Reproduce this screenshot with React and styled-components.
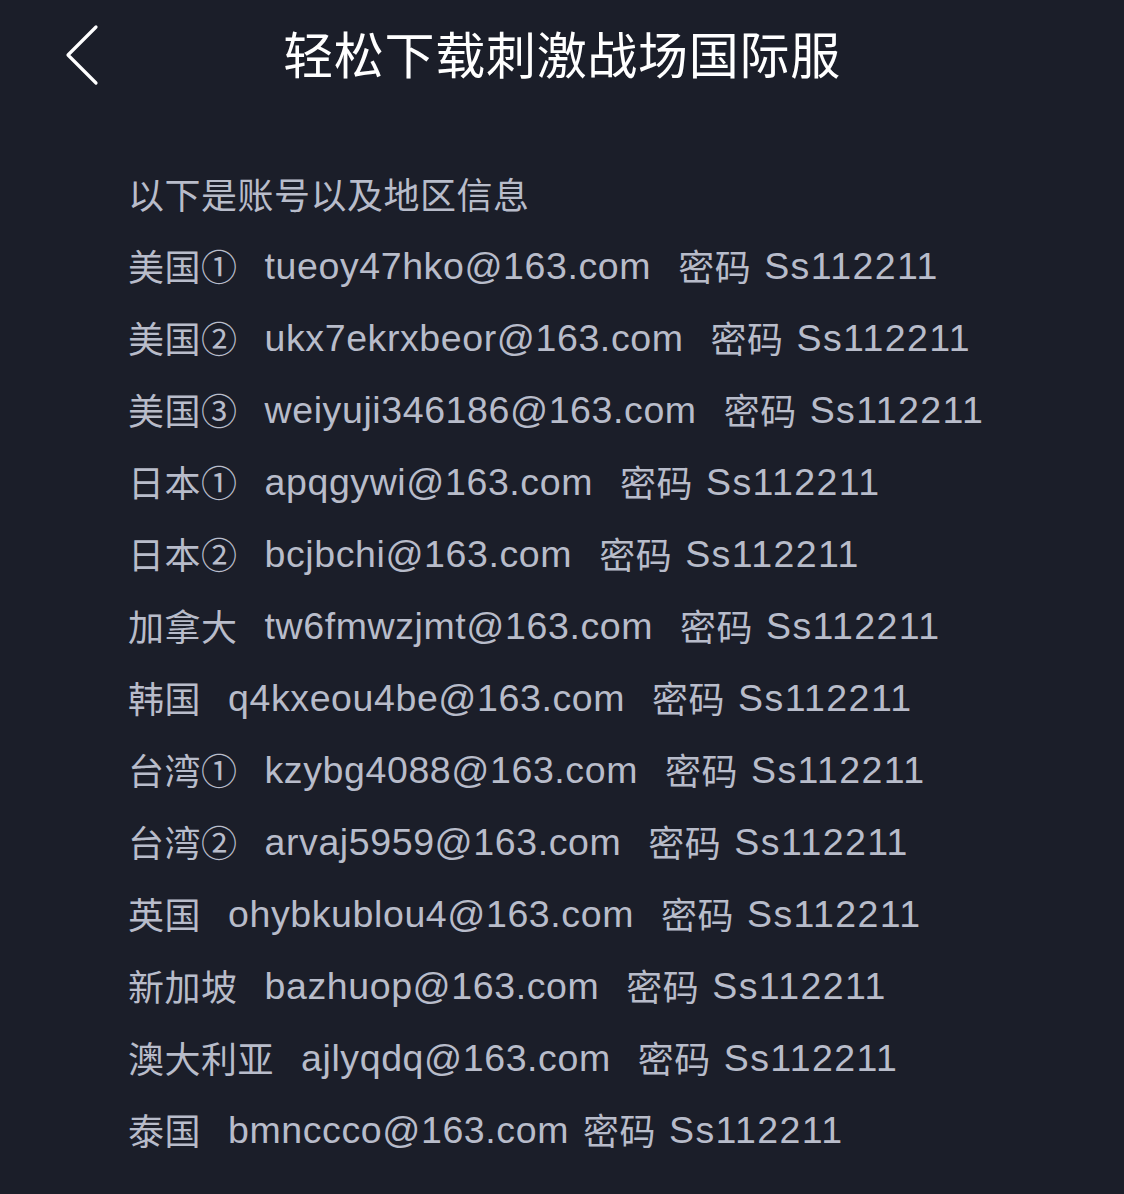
import React from 'react';
import styled, { createGlobalStyle } from 'styled-components';

const GlobalStyle = createGlobalStyle`
  html, body {
    margin: 0;
    padding: 0;
    background: #1b1e29;
  }
  body {
    font-family: "Liberation Sans", "Noto Sans CJK SC", sans-serif;
  }
`;

const Page = styled.div`
  width: 1124px;
  height: 1194px;
  background: #1b1e29;
  overflow: hidden;
`;

const TopBar = styled.div`
  height: 110px;
  display: grid;
  grid-template-columns: 130px 1fr 130px;
  align-items: center;
`;

const Back = styled.div`
  display: flex;
  align-items: center;
  padding-left: 64px;
  height: 100%;
`;

const Title = styled.h1`
  margin: 0 0 6px;
  text-align: center;
  color: #ffffff;
  font-family: "Noto Sans CJK SC", sans-serif;
  font-weight: 400;
  font-size: 50px;
  letter-spacing: 0.7px;
  line-height: 104px;
`;

const List = styled.div`
  padding: 48px 0 0 128px;
  color: #b8bcca;
`;

const Line = styled.div`
  display: flex;
  align-items: center;
  height: 72px;
  white-space: nowrap;
`;

const Cjk = styled.span`
  font-family: "Noto Sans CJK SC", sans-serif;
  font-size: 36px;
  letter-spacing: 0.5px;
  margin-top: -2px;
  margin-right: ${p => p.$gap || 0}px;
`;

const Latin = styled.span`
  font-family: "Liberation Sans", sans-serif;
  font-size: 37.5px;
  letter-spacing: ${p => p.$spacing || 0.6}px;
  margin-right: ${p => p.$gap || 0}px;
`;

const accounts = [
  ['美国①', 'tueoy47hko@163.com'],
  ['美国②', 'ukx7ekrxbeor@163.com'],
  ['美国③', 'weiyuji346186@163.com'],
  ['日本①', 'apqgywi@163.com'],
  ['日本②', 'bcjbchi@163.com'],
  ['加拿大', 'tw6fmwzjmt@163.com'],
  ['韩国', 'q4kxeou4be@163.com'],
  ['台湾①', 'kzybg4088@163.com'],
  ['台湾②', 'arvaj5959@163.com'],
  ['英国', 'ohybkublou4@163.com'],
  ['新加坡', 'bazhuop@163.com'],
  ['澳大利亚', 'ajlyqdq@163.com'],
  ['泰国', 'bmnccco@163.com', 14],
];

export default function App() {
  return (
    <Page>
      <GlobalStyle />
      <TopBar>
        <Back>
          <svg width="36" height="62" viewBox="0 0 36 62">
            <path d="M32 3 L4 31 L32 59" fill="none" stroke="#ffffff" strokeWidth="3.2" strokeLinecap="round" strokeLinejoin="round" />
          </svg>
        </Back>
        <Title>轻松下载刺激战场国际服</Title>
        <div />
      </TopBar>
      <List>
        <Line>
          <Cjk>以下是账号以及地区信息</Cjk>
        </Line>
        {accounts.map(([region, mail, gap]) => (
          <Line key={mail}>
            <Cjk $gap={27}>{region}</Cjk>
            <Latin $gap={gap || 27}>{mail}</Latin>
            <Cjk $gap={13}>密码</Cjk>
            <Latin $spacing={1.4}>Ss112211</Latin>
          </Line>
        ))}
      </List>
    </Page>
  );
}
